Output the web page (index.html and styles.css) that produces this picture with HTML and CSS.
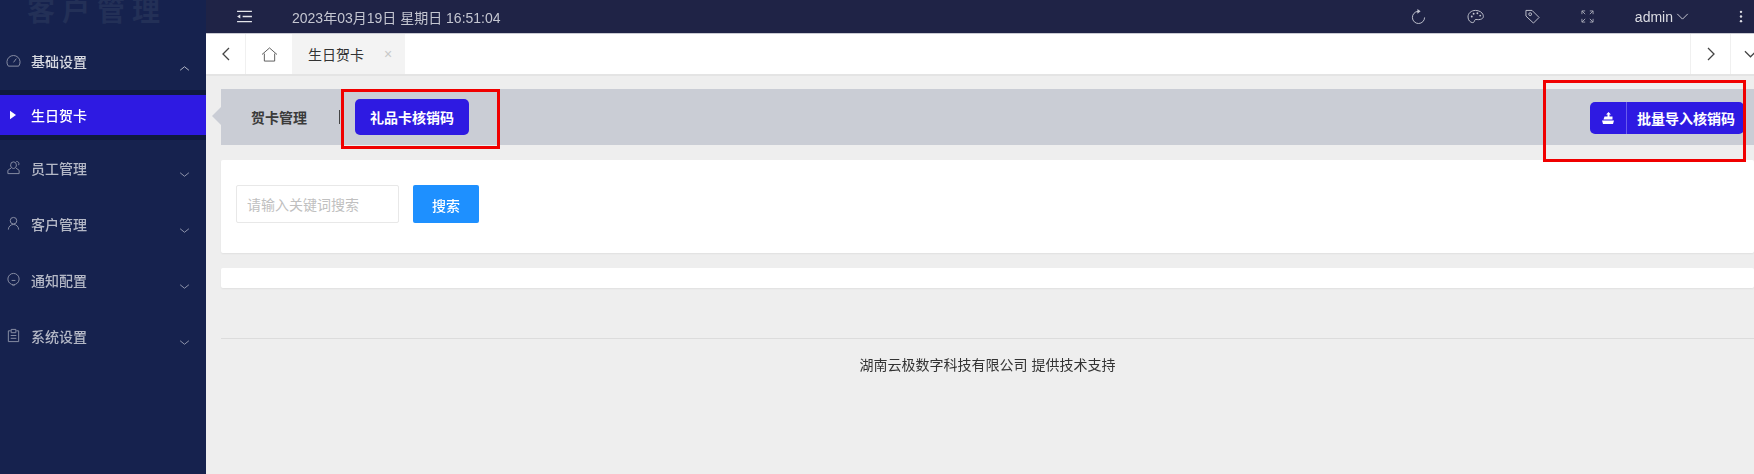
FILE: index.html
```html
<!DOCTYPE html>
<html lang="zh-CN">
<head>
<meta charset="utf-8">
<title>生日贺卡</title>
<link rel="stylesheet" href="styles.css">
</head>
<body>
<div class="app">
  <aside class="sidebar">
    <div class="logo"><span>客户管理</span></div>
    <nav class="menu">
      <div class="menu-group open">
        <svg class="mi" viewBox="0 0 16 16"><path d="M2.500 14a7 7 0 1 1 11 0zM8 10l3-4"/></svg>
        <span>基础设置</span>
        <svg class="chev" viewBox="0 0 12 8"><path d="M1 6l5-4 5 4"/></svg>
      </div>
      <div class="menu-active">
        <svg class="tri" viewBox="0 0 7 10"><path d="M0 0l7 5-7 5z"/></svg>
        <span>生日贺卡</span>
      </div>
      <div class="menu-group">
        <svg class="mi" viewBox="0 0 16 16"><path d="M8 9a3.300 3.300 0 0 0 3-4 3 3 0 0 0-6 0 3.300 3.300 0 0 0 3 4zM5.500 8.500L2 11v3.500h12V11l-3.500-2.500M11 1.500c2 0 3.500 1.500 2.500 4"/></svg>
        <span>员工管理</span>
        <svg class="chev" viewBox="0 0 12 8"><path d="M1 2l5 4 5-4"/></svg>
      </div>
      <div class="menu-group">
        <svg class="mi" viewBox="0 0 16 16"><circle cx="8" cy="5" r="3.500"/><path d="M2.500 14.500a5.500 5.500 0 0 1 11 0"/></svg>
        <span>客户管理</span>
        <svg class="chev" viewBox="0 0 12 8"><path d="M1 2l5 4 5-4"/></svg>
      </div>
      <div class="menu-group">
        <svg class="mi" viewBox="0 0 16 16"><circle cx="8" cy="7.500" r="6"/><path d="M6 9h4M7 14l1 1 1-1"/></svg>
        <span>通知配置</span>
        <svg class="chev" viewBox="0 0 12 8"><path d="M1 2l5 4 5-4"/></svg>
      </div>
      <div class="menu-group">
        <svg class="mi" viewBox="0 0 16 16"><path d="M5 3H2.500v11.500h11V3H11M5.500 1.500h5V5h-5zM5 8h6M5 11h6"/></svg>
        <span>系统设置</span>
        <svg class="chev" viewBox="0 0 12 8"><path d="M1 2l5 4 5-4"/></svg>
      </div>
    </nav>
  </aside>

  <div class="main">
    <header class="topbar">
      <svg class="toggler" viewBox="0 0 16 14"><path d="M0 1.500h16M6 7h10M0 12.500h16"/><path class="fill" d="M3.500 4.800L0 7l3.500 2.200z"/></svg>
      <span class="clock">2023年03月19日 星期日 16:51:04</span>
      <div class="tools">
        <svg class="tool" viewBox="0 0 16 16"><path d="M14.500 9a6.500 6.500 0 1 1-7-6.500"/><path class="fill" d="M6.800 0v5l3.400-2.500z"/></svg>
        <svg class="tool" viewBox="0 0 18 16"><path d="M9 1.500C4.500 1.500 1 4.500 1 8.500c0 3.500 2.500 6 5 6 2 0 1.500-2 2.500-3s3 .5 6-.5 3.300-2.500 2.500-5C16 3.500 13 1.500 9 1.500z"/><circle class="fill" cx="5" cy="8" r="1"/><circle class="fill" cx="7" cy="5" r="1"/><circle class="fill" cx="11" cy="4.500" r="1"/><circle class="fill" cx="14" cy="7" r="1"/></svg>
        <svg class="tool" viewBox="0 0 16 16"><path d="M1 1.500h6.500l7.500 7.500-6 6-8-7.500z"/><circle cx="5.500" cy="5.500" r="1.500"/></svg>
        <svg class="tool small" viewBox="0 0 14 14"><path d="M1 4.500V1h3.500M1 1l3.500 3.500M9.500 1H13v3.500M13 1L9.500 4.500M1 9.500V13h3.500M1 13l3.500-3.500M13 9.500V13H9.500M13 13L9.500 9.500"/></svg>
        <span class="user">admin<svg class="user-chev" viewBox="0 0 14 8"><path d="M1 1l6 6 6-6"/></svg></span>
        <svg class="dots" viewBox="0 0 4 14"><circle cx="2" cy="2" r="1.300"/><circle cx="2" cy="7" r="1.300"/><circle cx="2" cy="12" r="1.300"/></svg>
      </div>
    </header>

    <div class="tabbar">
      <button class="tab-btn back" type="button"><svg viewBox="0 0 8 14"><path d="M7 1L1 7l6 6"/></svg></button>
      <button class="tab-home" type="button"><svg viewBox="0 0 18 16"><path d="M1 8l8-7 8 7M3.500 7v8h11V7"/></svg></button>
      <div class="tab"><span>生日贺卡</span><i>×</i></div>
      <div class="tab-fill"></div>
      <button class="tab-btn" type="button"><svg viewBox="0 0 8 14"><path d="M1 1l6 6-6 6"/></svg></button>
      <button class="tab-btn last" type="button"><svg viewBox="0 0 14 8"><path d="M1 1l6 6 6-6"/></svg></button>
    </div>

    <main class="content">
      <div class="actionbar">
        <span class="bar-arrow"></span>
        <span class="bar-link">贺卡管理</span>
        <span class="bar-sep"></span>
        <button class="pill" type="button">礼品卡核销码</button>
        <div class="spacer"></div>
        <button class="import" type="button">
          <span class="import-icon"><svg viewBox="0 0 12 12"><path d="M6.500 0L9 2.500H7.500V4.500h3V7.500h-9L2.500 4.500h3V2.500H4zM0 8.500h12L11 12H1z"/></svg></span>
          <span class="import-text">批量导入核销码</span>
        </button>
        <span class="mark mark-a"></span>
        <span class="mark mark-b"></span>
      </div>

      <section class="card search">
        <input class="keyword" type="text" placeholder="请输入关键词搜索">
        <button class="search-btn" type="button">搜索</button>
      </section>

      <section class="card empty"></section>

      <footer class="footer">湖南云极数字科技有限公司 提供技术支持</footer>
    </main>
  </div>
</div>
</body>
</html>
```

FILE: styles.css
```css
* { box-sizing: border-box; }
html, body { margin: 0; height: 100%; overflow: hidden; }
body {
  font-family: "Liberation Sans", "Noto Sans CJK SC", sans-serif;
  font-size: 14px;
  background: #eeeeee;
}
button { font: inherit; border: 0; padding: 0; cursor: pointer; }
svg { display: block; fill: none; stroke: currentColor; }
svg .fill { fill: currentColor; stroke: none; }

.app { display: flex; height: 474px; width: 1754px; filter: blur(.35px); }

.sidebar { width: 206px; flex: none; background: #16224e; color: #b4b8c6; }
.logo {
  height: 33px;
  overflow: hidden;
  padding-left: 27px;
  font-size: 28px;
  line-height: 24px;
  letter-spacing: 7px;
  font-weight: 700;
  color: #233057;
}
.menu { display: flex; flex-direction: column; }
.menu-group {
  position: relative;
  display: flex;
  align-items: center;
  height: 56px;
  padding-left: 6px;
  padding-bottom: 1px;
  font-weight: 500;
}
.menu-group.open { height: 57px; padding-bottom: 2px; color: #d6d8e0; }
.mi { width: 15px; height: 15px; stroke-width: 1; margin-right: 10px; color: #8d92a8; }
.chev { position: absolute; right: 16px; top: 31px; width: 11px; height: 7px; stroke-width: 1; color: #9ea3b7; }
.menu-group.open .chev { top: 32px; color: #c5c8d3; }
.menu-active {
  display: flex;
  align-items: center;
  height: 50px;
  padding-left: 10px;
  background: #2e1ae2;
  border-top: 5px solid #0f1a3e;
  border-bottom: 5px solid #0f1a3e;
  color: #ffffff;
  font-weight: 500;
}
.tri { width: 6px; height: 10px; fill: #fff; stroke: none; margin-right: 15px; }

.main { flex: 1; min-width: 0; display: flex; flex-direction: column; }

.topbar {
  height: 33px;
  flex: none;
  display: flex;
  align-items: center;
  background: #1f2346;
  color: #c9cbd4;
  padding-left: 31px;
}
.toggler { width: 15px; height: 13px; stroke-width: 1.500; color: #e3e4ea; margin-right: 40px; }
.clock { font-size: 14px; color: #c4c6d1; }
.tools { margin-left: auto; display: flex; align-items: center; }
.tool { width: 15px; height: 15px; stroke-width: 1; margin-right: 41px; color: #c4c6d1; }
.tool.small { width: 13px; height: 13px; margin-right: 41px; color: #a5a8b6; }
.tool:nth-child(2) { width: 17px; }
.user { display: flex; align-items: center; gap: 3px; color: #dcdde4; font-size: 14px; margin-right: 50px; }
.user-chev { width: 13px; height: 7px; stroke-width: 1; }
.dots { width: 4px; height: 13px; fill: #dcdde4; stroke: none; margin-right: 11px; }

.tabbar {
  height: 43px;
  flex: none;
  display: flex;
  background: #ffffff;
  border-top: 1px solid #c9cad2;
  border-bottom: 2px solid #e4e4e4;
  color: #555;
}
.tab-btn {
  width: 40px;
  background: #fff;
  color: #444;
  display: flex;
  align-items: center;
  justify-content: center;
  border-left: 1px solid #f0f0f0;
}
.tab-btn.back { width: 40px; border-left: 0; border-right: 1px solid #f0f0f0; }
.tab-btn svg { width: 8px; height: 14px; stroke-width: 1.300; }
.tab-btn.last { width: 24px; justify-content: flex-start; padding-left: 13px; }
.tab-btn.last svg { width: 13px; height: 8px; flex: none; }
.tab-home { width: 46px; background: #fff; display: flex; align-items: center; justify-content: center; color: #555; }
.tab-home svg { width: 17px; height: 15px; stroke-width: 1; }
.tab {
  width: 113px;
  display: flex;
  align-items: center;
  background: #f3f3f3;
  padding-left: 16px;
  color: #333;
}
.tab i { font-style: normal; color: #c8c8c8; font-size: 14px; margin-left: 20px; }
.tab-fill { flex: 1; }

.content { flex: 1; padding: 13px 0 0 15px; display: flex; flex-direction: column; }

.actionbar {
  position: relative;
  height: 56px;
  flex: none;
  display: flex;
  align-items: center;
  background: #cacdd5;
  padding-left: 30px;
  padding-right: 10px;
}
.bar-arrow {
  position: absolute;
  left: -9px;
  top: 18px;
  border-right: 9px solid #cacdd5;
  border-top: 9px solid transparent;
  border-bottom: 9px solid transparent;
}
.bar-link { font-weight: 700; color: #3b3b3b; font-size: 14px; }
.bar-sep { width: 1px; height: 14px; background: #444; margin: 0 15px 0 32px; }
.pill {
  width: 114px;
  height: 36px;
  border-radius: 5px;
  background: #2e1ae2;
  color: #fff;
  font-weight: 700;
  font-size: 14px;
}
.spacer { flex: 1; }
.import {
  display: flex;
  height: 32px;
  width: 154px;
  border-radius: 5px;
  background: #2e1ae2;
  color: #fff;
  align-items: stretch;
  font-weight: 700;
  font-size: 14px;
  margin-top: 1px;
}
.import-icon {
  width: 37px;
  display: flex;
  align-items: center;
  justify-content: center;
  border-right: 1px solid #6a5cec;
}
.import-icon svg { width: 12px; height: 12px; fill: #fff; stroke: none; }
.import-text { flex: 1; display: flex; align-items: center; padding-left: 10px; white-space: nowrap; }

.mark { position: absolute; border: 3px solid #f00000; pointer-events: none; }
.mark-a { left: 120px; top: 0; width: 159px; height: 60px; }
.mark-b { right: 8px; top: -9px; width: 203px; height: 82px; }

.card { background: #fff; border-radius: 2px; box-shadow: 0 1px 2px rgba(0, 0, 0, .06); }
.search {
  height: 93px;
  margin-top: 15px;
  flex: none;
  display: flex;
  gap: 14px;
  padding: 25px 0 0 15px;
}
.keyword {
  width: 163px;
  height: 38px;
  border: 1px solid #e8e8e8;
  border-radius: 2px;
  padding: 1px 10px 0;
  font: inherit;
  outline: 0;
  background: #fff;
}
.keyword::placeholder { color: #c0c0c0; opacity: 1; }
.search-btn {
  width: 66px;
  height: 38px;
  padding-top: 1px;
  background: #1e90ff;
  color: #fff;
  border-radius: 2px;
  font-weight: 500;
}
.empty { height: 20px; margin-top: 15px; flex: none; }
.footer {
  margin-top: 50px;
  border-top: 1px solid #dcdcdc;
  padding-top: 16px;
  text-align: center;
  font-size: 14px;
  line-height: 20px;
  color: #333;
}
```
